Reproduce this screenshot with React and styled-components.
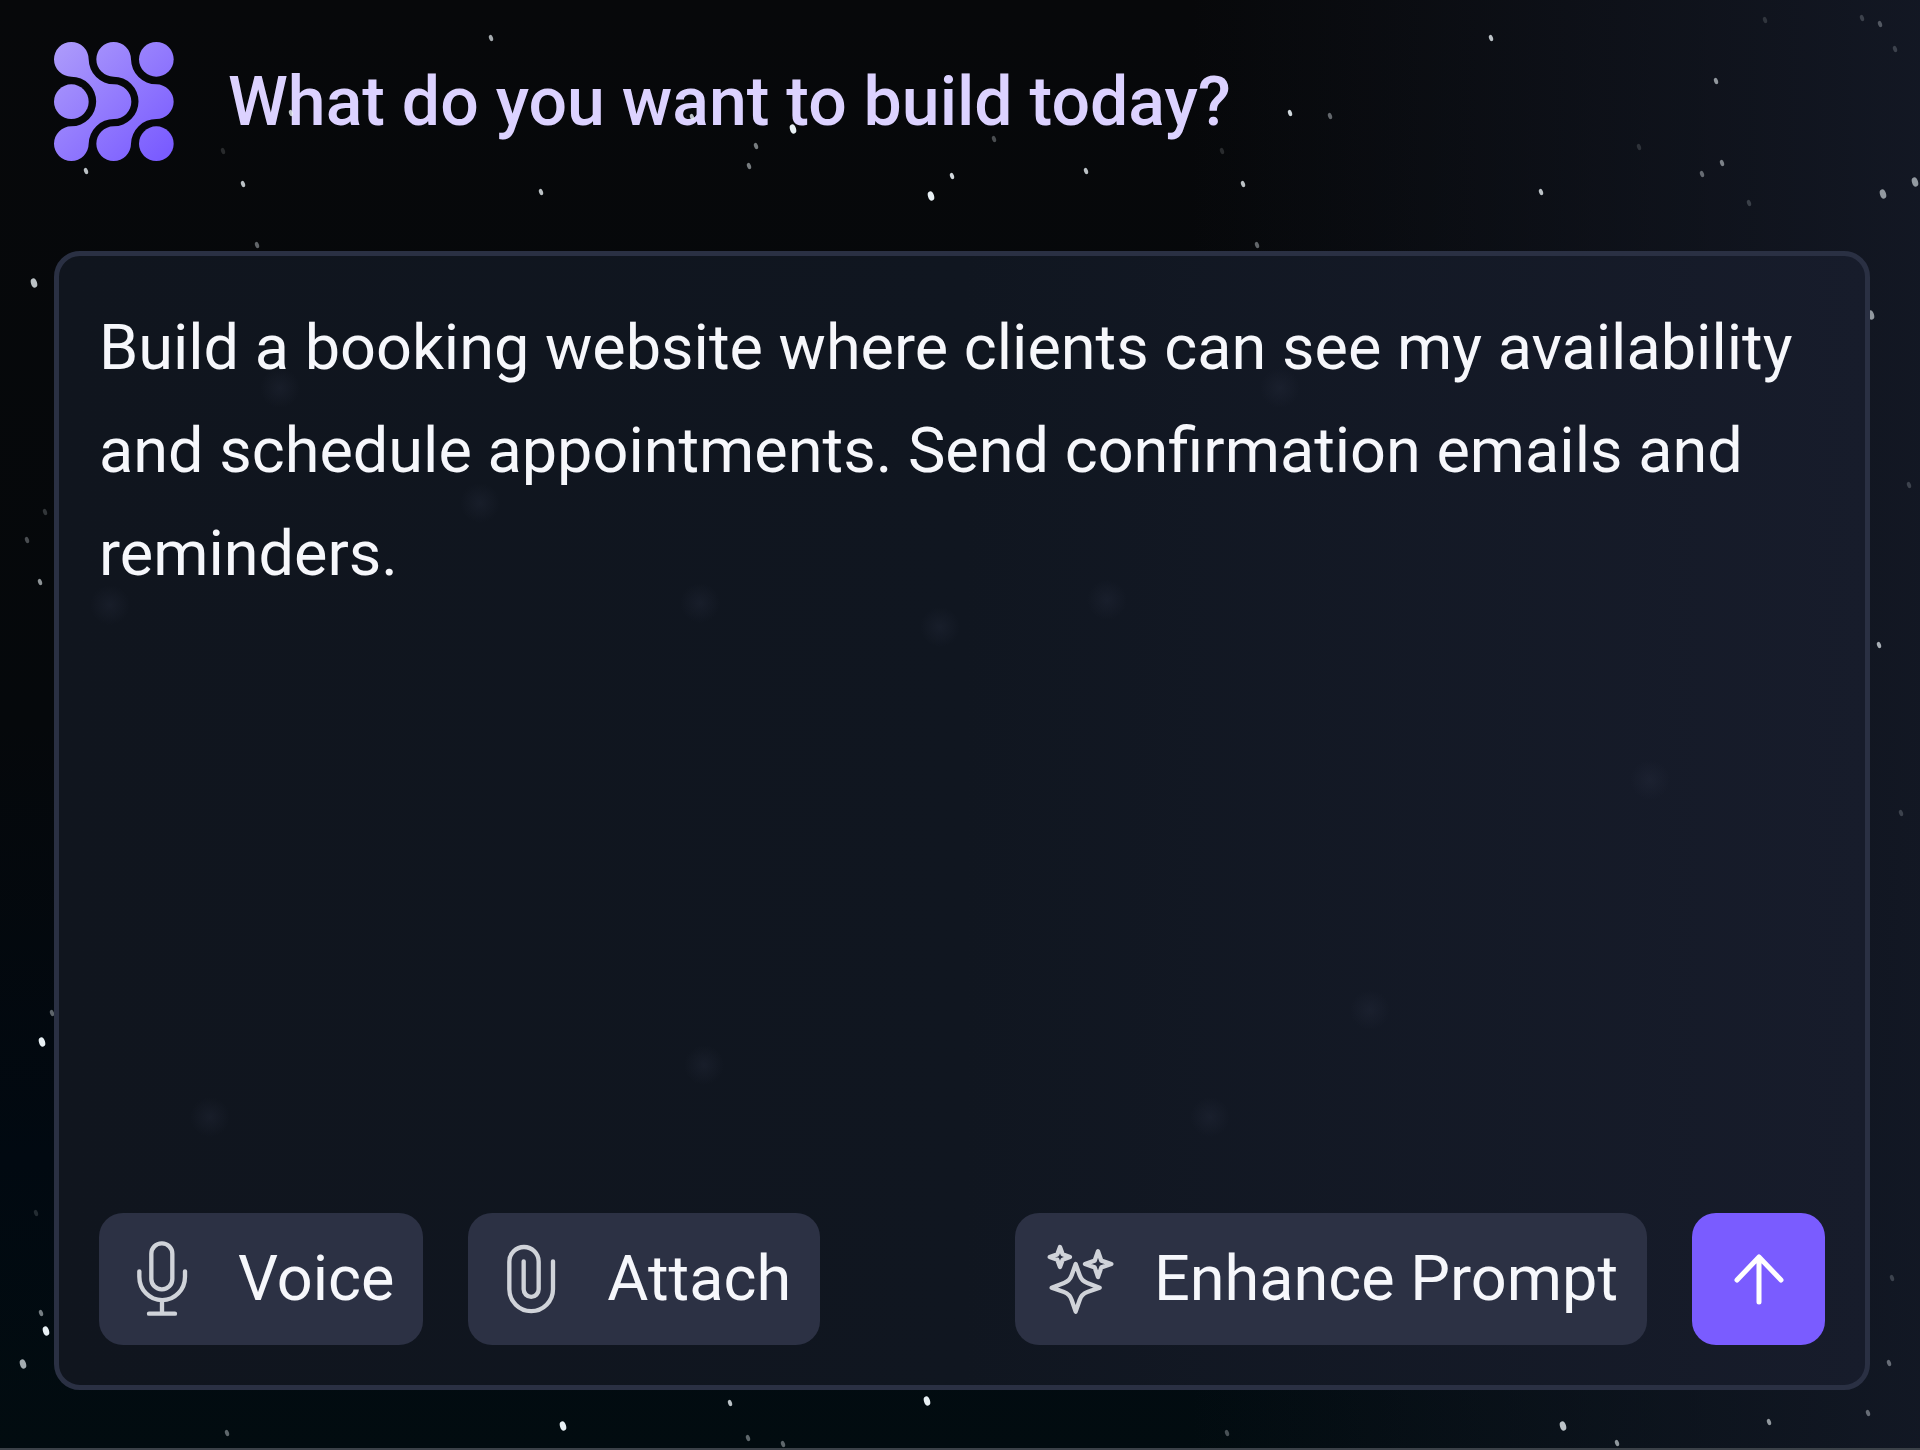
import React from 'react';
import styled, { createGlobalStyle } from 'styled-components';

const GlobalStyle = createGlobalStyle`
    * {
        box-sizing: border-box;
    }

    body {
        margin: 0;
        background: #07080a;
        font-family: Roboto, 'Liberation Sans', sans-serif;
    }
`

const Page = styled.main`
    position: relative;
    display: flex;
    flex-direction: column;
    gap: 90px;
    min-height: 100vh;
    padding: 42px 50px 58px 54px;
    border-bottom: 2px solid #3b4148;
    background:
        linear-gradient(to right, rgba(20, 25, 38, 0) 62%, rgba(20, 25, 38, 0.9) 100%),
        linear-gradient(to bottom, #07080a 0%, #05080b 50%, #010911 80%, #020c10 100%);
`

const Sky = styled.svg`
    position: absolute;
    inset: 0;
    width: 100%;
    height: 100%;
    pointer-events: none;
`

const Header = styled.header`
    display: flex;
    align-items: center;
    gap: 54px;
    height: 119px;
`

const Logo = styled.svg`
    width: 120px;
    height: 119px;
    flex: none;
`

const Title = styled.h1`
    margin: 0;
    color: #dcd2ff;
    font-size: 68px;
    font-weight: 500;
    line-height: 84px;
    white-space: nowrap;
`

const PromptBox = styled.form`
    position: relative;
    display: flex;
    flex: 1;
    flex-direction: column;
    padding: 40px;
    border: 5px solid #2a3043;
    border-radius: 26px;
    background: linear-gradient(to right, #10151e 0%, #101620 50%, #171c2b 100%);
`

const PromptInput = styled.textarea`
    flex: 1;
    width: 100%;
    padding: 0;
    border: 0;
    outline: 0;
    resize: none;
    overflow: hidden;
    background: transparent;
    color: #f6f7fb;
    font-family: inherit;
    font-size: 63px;
    line-height: 103px;
`

const Toolbar = styled.div`
    display: flex;
    gap: 45px;
    height: 132px;
`

const ToolButton = styled.button`
    display: flex;
    align-items: center;
    gap: 38px;
    margin: 0 0 0 ${props => props.$push ? 'auto' : '0'};
    padding: 0 29px 0 25px;
    border: 0;
    border-radius: 24px;
    background: #2c3144;
    color: #f6f7fb;
    font-family: inherit;
    font-size: 63px;
    line-height: 76px;
    white-space: nowrap;
    cursor: pointer;
`

const SendButton = styled.button`
    display: flex;
    align-items: center;
    justify-content: center;
    width: 133px;
    padding: 0;
    border: 0;
    border-radius: 24px;
    background: #7a5cff;
    cursor: pointer;
`

const Icon = styled.svg`
    flex: none;
    width: ${props => props.$size || 76}px;
    height: ${props => props.$size || 76}px;
    fill: none;
    stroke: ${props => props.$color || '#d0d3d9'};
    stroke-width: ${props => props.$stroke || 13};
    stroke-linecap: round;
    stroke-linejoin: round;
`

// x, y, size, opacity
const stars = [
    [491, 38, 2, 0.7], [291, 113, 2, 0.8], [692, 117, 2, 0.8], [793, 129, 3, 1],
    [86, 171, 2, 0.8], [243, 184, 2, 0.8], [541, 192, 2, 0.8], [223, 151, 2, 0.15],
    [756, 146, 2, 0.5], [749, 166, 2, 0.5], [952, 176, 2, 0.9], [931, 196, 3, 1],
    [1086, 171, 2, 0.8], [1243, 184, 2, 0.8], [1290, 113, 2, 0.9], [1330, 116, 2, 0.4],
    [994, 139, 2, 0.3], [257, 245, 2, 0.4], [1257, 245, 2, 0.4], [1222, 151, 2, 0.15],
    [1491, 38, 2, 0.8], [1716, 81, 2, 0.6], [1541, 192, 2, 0.8], [1722, 163, 2, 0.5],
    [1702, 174, 2, 0.4], [1749, 203, 2, 0.2], [1883, 194, 3, 0.6], [1915, 182, 3, 0.6],
    [1880, 24, 2, 0.3], [1862, 18, 2, 0.2], [1895, 49, 2, 0.2], [1765, 20, 2, 0.15],
    [1639, 147, 2, 0.15], [1871, 315, 3, 0.6], [1879, 645, 2, 0.7], [1909, 485, 2, 0.2],
    [34, 283, 3, 0.8], [45, 512, 2, 0.2], [27, 540, 2, 0.3], [40, 582, 2, 0.6],
    [52, 1013, 2, 0.4], [42, 1042, 3, 1], [41, 1313, 2, 0.5], [46, 1331, 3, 1],
    [23, 1364, 3, 0.7], [36, 1213, 2, 0.15], [730, 1403, 2, 0.8], [563, 1426, 3, 1],
    [927, 1401, 3, 1], [783, 1444, 2, 0.4], [227, 1433, 2, 0.4], [1227, 1433, 2, 0.3],
    [1563, 1426, 3, 0.8], [1617, 1443, 2, 0.6], [1769, 1422, 2, 0.6], [1868, 1413, 2, 0.4],
    [1889, 1363, 2, 0.4], [1892, 1278, 2, 0.2], [1901, 813, 2, 0.2], [748, 1438, 2, 0.4],
]

// soft specks that show through the prompt box
const specks = [
    [110, 605], [280, 388], [480, 503], [700, 603], [940, 627], [1107, 600],
    [1280, 388], [1650, 780], [704, 1065], [210, 1117], [1210, 1117], [1370, 1010],
]

const StarField = () => (
    <Sky viewBox="0 0 1920 1450" preserveAspectRatio="xMinYMin slice" aria-hidden="true">
        {stars.map(([x, y, size, opacity]) => (
            <ellipse
                key={`${x}-${y}`}
                cx={x}
                cy={y}
                rx={size}
                ry={size * 1.6}
                fill="#e8f0f4"
                opacity={opacity}
                transform={`rotate(-18 ${x} ${y})`}
            />
        ))}
    </Sky>
)

const Specks = () => (
    <Sky viewBox="59 256 1806 1129" preserveAspectRatio="xMinYMin slice" aria-hidden="true">
        <defs>
            <radialGradient id="speck">
                <stop offset="0" stopColor="#2a3042" stopOpacity="0.3" />
                <stop offset="1" stopColor="#2a3042" stopOpacity="0" />
            </radialGradient>
        </defs>
        {specks.map(([x, y]) => (
            <circle key={`${x}-${y}`} cx={x} cy={y} r="20" fill="url(#speck)" />
        ))}
    </Sky>
)

const BrandLogo = () => (
    <Logo viewBox="68 65 360 357" role="img" aria-label="Logo">
        <defs>
            <linearGradient id="brand" gradientUnits="userSpaceOnUse" x1="90" y1="80" x2="400" y2="400">
                <stop offset="0" stopColor="#ab99fb" />
                <stop offset="1" stopColor="#7a5cff" />
            </linearGradient>
        </defs>
        <g fill="url(#brand)">
            <path d="M172 117A76 76 0 0 0 248 192A52 52 0 0 1 248 296A76 76 0 0 0 172 370A52 52 0 1 1 120 318A74 74 0 0 0 120 169A52 52 0 1 1 172 117Z" />
            <path d="M299 117A76 76 0 0 0 375 192A52 52 0 0 1 375 296A76 76 0 0 0 299 370A52 52 0 1 1 247 318A74 74 0 0 0 247 169A52 52 0 1 1 299 117Z" />
            <circle cx="375" cy="117" r="52" />
            <circle cx="120" cy="244" r="52" />
            <circle cx="375" cy="370" r="52" />
        </g>
    </Logo>
)

const MicIcon = () => (
    <Icon viewBox="102 121 228 228" aria-hidden="true">
        <rect x="184" y="128" width="63" height="138" rx="31" />
        <path d="M148 212V228A68 70 0 0 0 285 228V212" />
        <path d="M216 299V339M177 339H255" />
    </Icon>
)

const ClipIcon = () => (
    <Icon viewBox="126 121 228 228" aria-hidden="true">
        <path d="M306 182V266A65 65 0 0 1 175 266V183A44 44 0 0 1 263 183V266A22 22 0 0 1 218 266V182" />
    </Icon>
)

const SparklesIcon = () => (
    <Icon viewBox="118 121 228 228" aria-hidden="true">
        <path d="M225 190L237 224Q243 241 260 247L297 261L260 274Q243 280 237 298L225 333L213 298Q207 280 190 274L153 261L190 247Q207 241 213 224Z" />
        <path d="M178 139L186 161L208 169L186 177L178 199L170 177L147 169L170 161Z" />
        <path d="M292 152L302 180L332 190L302 200L292 229L282 200L253 190L282 180Z" />
    </Icon>
)

const ArrowIcon = () => (
    <Icon viewBox="0 0 60 60" $size={60} $color="#ffffff" $stroke={5} aria-hidden="true">
        <path d="M30 53V8M8 31L30 8L52 31" />
    </Icon>
)

export default function App() {
    return (
        <>
            <GlobalStyle />
            <Page>
                <StarField />
                <Header>
                    <BrandLogo />
                    <Title>What do you want to build today?</Title>
                </Header>
                <PromptBox onSubmit={e => e.preventDefault()}>
                    <Specks />
                    <PromptInput
                        aria-label="Prompt"
                        spellCheck="false"
                        defaultValue="Build a booking website where clients can see my availability and schedule appointments. Send confirmation emails and reminders."
                    />
                    <Toolbar>
                        <ToolButton type="button"><MicIcon />Voice</ToolButton>
                        <ToolButton type="button"><ClipIcon />Attach</ToolButton>
                        <ToolButton type="button" $push><SparklesIcon />Enhance Prompt</ToolButton>
                        <SendButton type="submit" aria-label="Send"><ArrowIcon /></SendButton>
                    </Toolbar>
                </PromptBox>
            </Page>
        </>
    )
}
